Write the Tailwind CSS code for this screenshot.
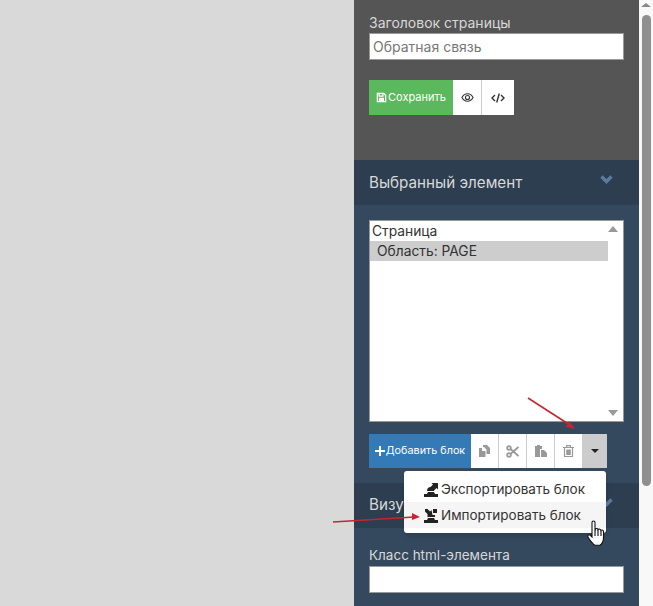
<!DOCTYPE html>
<html lang="ru">
  <head>
    <meta charset="UTF-8" />
    <title>Редактор страницы</title>
    <script src="https://cdn.jsdelivr.net/npm/@tailwindcss/browser@4"></script>
  </head>
  <body class="bg-[#d9d9d9] font-['Inter','Noto_Sans',sans-serif] overflow-hidden">
    <div class="relative w-[653px] h-[606px] flex overflow-hidden">
      <!-- Canvas -->
      <div class="w-[354px] bg-[#d9d9d9]"></div>

      <!-- Sidebar -->
      <div class="w-[285px] flex flex-col text-[#d8d8d8]">
        <div class="h-[160px] bg-[#555555] px-[15px] pt-[14px]">
          <div class="text-[14px] leading-[18px]">Заголовок страницы</div>
          <div class="mt-[1px] w-[255px] h-[27px] bg-white border border-[#999] px-[3px] text-[14px] leading-[25px] text-[#777]">Обратная связь</div>
          <div class="mt-[20px] flex h-[35px]">
            <div class="w-[84px] bg-[#5cb85c] text-white text-[11px] flex items-center justify-center gap-[1px]">
              <svg class="w-[11px] h-[11px]" viewBox="0 0 12 12" fill="none" stroke="currentColor" stroke-width="1.4"><path d="M1.500 1.500h7l2 2v7h-9z" /><path d="M3.500 2v2.500h4V2" /><rect x="4" y="7" width="4" height="2.500" fill="currentColor" /></svg>
              Сохранить
            </div>
            <div class="w-[29px] bg-white border-r border-[#ccc] flex items-center justify-center text-[#333]">
              <svg class="w-[13px] h-[13px]" viewBox="0 0 14 14" fill="none" stroke="currentColor" stroke-width="1.200"><path d="M1 7c1.500-2.800 3.600-4 6-4s4.500 1.200 6 4c-1.500 2.800-3.600 4-6 4s-4.500-1.200-6-4z" /><circle cx="7" cy="7" r="2.200" /></svg>
            </div>
            <div class="w-[32px] bg-white flex items-center justify-center text-[#333]">
              <svg class="w-[14px] h-[12px]" viewBox="0 0 14 12" fill="none" stroke="currentColor" stroke-width="1.400"><path d="M4 3 1 6l3 3M10 3l3 3-3 3M8.300 1.500 5.700 10.500" /></svg>
            </div>
          </div>
        </div>

        <div class="h-[45px] bg-[#2c3e50] px-[15px] flex items-center justify-between">
          <span class="text-[15.200px] pt-[1px]">Выбранный элемент</span>
          <svg class="w-[13px] h-[9px] mr-[11px] mb-[6px] text-[#5b7a9f]" viewBox="0 0 13 9" fill="none" stroke="currentColor" stroke-width="3.400"><path d="M1.500 1.500l5 5 5-5" /></svg>
        </div>

        <div class="h-[278px] bg-[#34495e] px-[15px] pt-[15px]">
          <div class="relative w-[255px] h-[202px] bg-white border border-[#999] text-[13.800px] leading-[20px] text-[#333]">
            <div class="pl-[2px]">Страница</div>
            <div class="w-[238px] bg-[#cdcdcd] pl-[7px]">Область: PAGE</div>
            <div class="absolute right-[5px] top-[5px] w-0 h-0 border-x-[5px] border-x-transparent border-b-[6px] border-b-[#999]"></div>
            <div class="absolute right-[5px] bottom-[5px] w-0 h-0 border-x-[5px] border-x-transparent border-t-[6px] border-t-[#999]"></div>
          </div>
          <div class="mt-[12px] flex h-[34px]">
            <div class="w-[102px] bg-[#337ab7] text-white text-[10.800px] flex items-center justify-center">
              <svg class="w-[10px] h-[10px] mr-[1px]" viewBox="0 0 10 10" fill="currentColor"><path d="M4 0h2v4h4v2H6v4H4V6H0V4h4z" /></svg>
              Добавить блок
            </div>
            <div class="w-[28px] bg-white border-r border-[#ccc] flex items-center justify-center text-[#999]">
              <svg class="w-[11px] h-[12px]" viewBox="0 0 11 12" fill="currentColor"><path d="M4 0h4l3 3v6H7.500V4.500L5 2H4z" /><path d="M0 3h3v3h3.500v6H0z" /></svg>
            </div>
            <div class="w-[28px] bg-white border-r border-[#ccc] flex items-center justify-center text-[#999]">
              <svg class="w-[13px] h-[13px]" viewBox="0 0 13 13" fill="none" stroke="currentColor" stroke-width="1.800"><circle cx="3" cy="3" r="1.800" /><circle cx="3" cy="10" r="1.800" /><path d="M4.500 4 12.500 11M4.500 9 12.500 2" /></svg>
            </div>
            <div class="w-[28px] bg-white border-r border-[#ccc] flex items-center justify-center text-[#999]">
              <svg class="w-[12px] h-[12px]" viewBox="0 0 12 12" fill="currentColor"><path d="M0 1h2V0h3v1h2v3H5v8H0z" /><path d="M6 5h3l3 3v4H6z" /></svg>
            </div>
            <div class="w-[28px] bg-white border-r border-[#ccc] flex items-center justify-center text-[#999]">
              <svg class="w-[11px] h-[12px]" viewBox="0 0 11 12" fill="none" stroke="currentColor" stroke-width="1.200"><path d="M0 2.500h11M3.500 2.500V.6h4v1.900M1.500 2.500v9h8v-9" /><path d="M3.200 4.500h4.600v5.500H3.200z" fill="currentColor" stroke="none" /></svg>
            </div>
            <div class="w-[24px] bg-[#cccccc] flex items-center justify-center">
              <div class="w-0 h-0 border-x-[4.500px] border-x-transparent border-t-[4.500px] border-t-[#222]"></div>
            </div>
          </div>
        </div>

        <div class="h-[45px] bg-[#2c3e50] px-[15px] flex items-center justify-between">
          <span class="text-[15.200px]">Визуальные настройки</span>
          <svg class="w-[13px] h-[9px] mr-[11px] mb-[6px] text-[#5b7a9f]" viewBox="0 0 13 9" fill="none" stroke="currentColor" stroke-width="3.400"><path d="M1.500 1.500l5 5 5-5" /></svg>
        </div>

        <div class="flex-1 bg-[#34495e] px-[15px] pt-[18px]">
          <div class="text-[13.500px] leading-[18px]">Класс html-элемента</div>
          <div class="mt-[2px] w-[255px] h-[27px] bg-white border border-[#999]"></div>
        </div>
      </div>

      <!-- Scrollbar -->
      <div class="relative w-[14px] bg-[#f8f8f8]">
        <div class="absolute left-[3px] top-[15px] w-[9px] h-[471px] rounded-full bg-[#8f8f8f]"></div>
        <div class="absolute left-[2px] top-[3px] w-0 h-0 border-x-[5px] border-x-transparent border-b-[4px] border-b-[#888]"></div>
      </div>

      <!-- Dropdown menu -->
      <div class="absolute left-[404px] top-[471px] w-[202px] h-[62px] bg-white rounded-[3px] shadow-md py-[5px] text-[13.500px] leading-[26px] text-[#333]">
        <div class="h-[26px] pl-[20px] flex items-center gap-[3px]">
          <svg class="w-[14px] h-[15px] text-[#222]" viewBox="0 0 14 15" fill="currentColor"><path d="M0 15v-3h3l1-2h6l1 2h3v3z" /><path d="M3 9c0-2.500 1.500-4 3.500-4L9 2.500 7.500 1H14v6.500L12.500 6 10 8.500V9z" /></svg>
          Экспортировать блок
        </div>
        <div class="h-[26px] pl-[20px] flex items-center gap-[3px] bg-[#f5f5f5]">
          <svg class="w-[14px] h-[15px] text-[#222]" viewBox="0 0 14 15" fill="currentColor"><path d="M0 15v-3h3l1-2h6l1 2h3v3z" /><path d="M3.500 9V6L1 3.500V1h2.500L6 3.500l1.500-1.500L8.500 7H11v2z" /><path d="M9 1h4v4H9z" /></svg>
          Импортировать блок
        </div>
      </div>

      <!-- Hand cursor -->
      <svg class="absolute left-[587px] top-[520px] w-[20px] h-[27px]" viewBox="0 0 20 27" fill="#fff" stroke="#111" stroke-width="1.100"><path d="M5 2.500c0-2 3-2 3 0V11l.5-2c1-1 2.500-.5 2.500.7l.3-.2c1-1 2.500-.3 2.500 1l.3-.2c1.200-.7 2.400 0 2.400 1.400v6c0 3-1.500 6-3.500 7.500H8C6 24.500 2 19 1 17c-.8-1.500.8-2.800 2-1.800L5 17z" /><path d="M8 11v5M11 10v6M14 11v5" /></svg>

      <!-- Red annotation arrows -->
      <svg class="absolute inset-0 w-[653px] h-[606px] pointer-events-none" viewBox="0 0 653 606" fill="none">
        <path d="M528 398 573 427" stroke="#c8242b" stroke-width="1.500" />
        <path d="M569 421 575 429 566 427z" fill="#c8242b" />
        <path d="M333 522 414 517" stroke="#c8242b" stroke-width="1.500" />
        <path d="M412 513 420 517 412 520z" fill="#c8242b" />
      </svg>
    </div>
  </body>
</html>
